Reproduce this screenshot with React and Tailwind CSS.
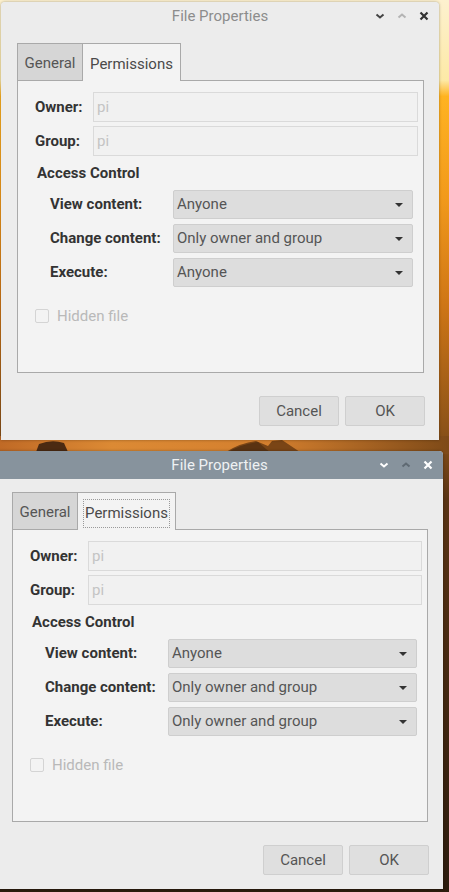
import React from "react";

function Wallpaper() {
  // desktop picture behind the two dialogs
  return (
    <svg className="absolute inset-0" width="449" height="892" viewBox="0 0 449 892">
      <defs>
        <linearGradient id="sky" x1="0" y1="0" x2="0" y2="1">
          <stop offset="0" stopColor="#fdf1cf" />
          <stop offset="0.09" stopColor="#fde9a6" />
          <stop offset="0.108" stopColor="#ffb321" />
          <stop offset="0.22" stopColor="#f29a1b" />
          <stop offset="0.34" stopColor="#cf7616" />
          <stop offset="0.48" stopColor="#8d5318" />
          <stop offset="0.56" stopColor="#5a3414" />
          <stop offset="1" stopColor="#2c1c0e" />
        </linearGradient>
        <linearGradient id="strip" x1="0" y1="0" x2="1" y2="0">
          <stop offset="0" stopColor="#c06a26" />
          <stop offset="0.25" stopColor="#dc8a34" />
          <stop offset="0.6" stopColor="#d47f2e" />
          <stop offset="1" stopColor="#7e4a18" />
        </linearGradient>
      </defs>
      <rect width="449" height="892" fill="url(#sky)" />
      <rect y="436" width="449" height="18" fill="url(#strip)" />
      <path d="M36 452 L39 444 Q52 439 64 443 L68 452 Z" fill="#4b2a12" />
      <path d="M226 452 Q240 443 256 441 L268 446 L272 441 L282 440 L300 452 Z" fill="#7a4516" />
      <path d="M228 452 Q242 444 258 442 L266 449 L270 452 Z" fill="#5a3312" />
    </svg>
  );
}

function Chevron({ up, color }) {
  return (
    <svg width="10" height="10" viewBox="0 0 10 10">
      <polyline
        points={up ? "1.5,6.5 5,3.5 8.5,6.5" : "1.5,3.5 5,6.5 8.5,3.5"}
        fill="none"
        stroke={color}
        strokeWidth="2"
      />
    </svg>
  );
}

function Close({ color }) {
  return (
    <svg width="10" height="10" viewBox="0 0 10 10">
      <path d="M1.5 1.5 L8.5 8.5 M8.5 1.5 L1.5 8.5" stroke={color} strokeWidth="2.2" />
    </svg>
  );
}

function TitleBar({ active }) {
  return (
    <div
      className={`relative flex h-[28px] items-center justify-center rounded-t-[4px] ${
        active ? "bg-[#87939d] text-[#eef1f3]" : "bg-[#ececec] text-[#8c8c8c]"
      }`}
    >
      <span className="text-[15px]">File Properties</span>
      <div className="absolute right-[10px] top-0 flex h-full items-center gap-[12px]">
        <Chevron color={active ? "#ffffff" : "#444444"} />
        <Chevron up color={active ? "#5f6a73" : "#b4b4b4"} />
        <Close color={active ? "#ffffff" : "#333333"} />
      </div>
    </div>
  );
}

function Combo({ value }) {
  return (
    <div className="flex h-[29px] flex-1 items-center justify-between rounded-[2px] border border-[#cecece] bg-[#dddddd] pl-[3px] pr-[8px] text-[#555555]">
      <span>{value}</span>
      <svg width="10" height="6" viewBox="0 0 10 6">
        <polygon points="1,1 9,1 5,5" fill="#333333" />
      </svg>
    </div>
  );
}

function Dialog({ active, execute, className }) {
  const rows = [
    ["View content:", "Anyone"],
    ["Change content:", "Only owner and group"],
    ["Execute:", execute],
  ];

  return (
    <div
      className={`relative flex flex-col rounded-t-[4px] bg-[#ececec] shadow-[0_0_3px_rgba(0,0,0,0.35)] ${className}`}
    >
      <TitleBar active={active} />

      <div className="ml-[16px] mr-[15px] mt-[13px] flex flex-col">
        {/* tabs */}
        <div className="flex">
          <div className="flex h-[37px] w-[66px] items-center justify-center border border-b-0 border-[#a9a9a9] bg-[#d6d6d6] pt-[2px] text-[#555555]">
            General
          </div>
          <div className="relative z-10 -mb-px flex h-[38px] w-[98px] border border-b-0 border-l-0 border-[#a9a9a9] bg-[#f3f3f3] px-[5px] pb-[2px] pt-[6px] text-[#4a4a4a]">
            <span
              className={`flex flex-1 items-center justify-center border border-dotted ${
                active ? "border-[#9a9a9a]" : "border-transparent"
              }`}
            >
              Permissions
            </span>
          </div>
        </div>

        {/* page */}
        <div className="flex h-[293px] flex-col border border-[#a9a9a9] bg-[#f3f3f3] pl-[17px] pr-[5px] pt-[11px]">
          {["Owner:", "Group:"].map((label, i) => (
            <div key={label} className={`flex h-[30px] items-center ${i ? "mt-[4px]" : ""}`}>
              <span className="w-[58px] font-bold text-[#333333]">{label}</span>
              <div className="flex h-[30px] flex-1 items-center border border-[#dadada] bg-[#f1f1f1] pl-[3px] text-[#c4c4c4]">
                pi
              </div>
            </div>
          ))}

          <div className="mt-[7px] h-[20px] pl-[2px] font-bold leading-[20px] text-[#333333]">
            Access Control
          </div>

          <div className="mt-[7px] flex flex-col gap-[5px]">
            {rows.map(([label, value]) => (
              <div key={label} className="mr-[5px] flex items-center">
                <span className="w-[138px] pl-[15px] font-bold text-[#333333]">{label}</span>
                <Combo value={value} />
              </div>
            ))}
          </div>

          <div className="mt-[22px] flex h-[14px] items-center">
            <span className="h-[14px] w-[14px] rounded-[2px] border border-[#d4d4d4] bg-[#f3f3f3]" />
            <span className="ml-[8px] text-[#b9b9b9]">Hidden file</span>
          </div>
        </div>
      </div>

      {/* buttons */}
      <div className="mb-[14px] mr-[14px] mt-[23px] flex justify-end gap-[6px]">
        {["Cancel", "OK"].map((b) => (
          <button
            key={b}
            className="h-[30px] w-[80px] rounded-[2px] border border-[#cfcfcf] bg-[#dfdfdf] text-[#555555]"
          >
            {b}
          </button>
        ))}
      </div>
    </div>
  );
}

export default function App() {
  return (
    <div className="relative h-[892px] w-[449px] overflow-hidden font-[Roboto,sans-serif] text-[15px]">
      <Wallpaper />
      <div className="relative flex flex-col">
        <Dialog className="ml-[1px] mt-[2px] w-[438px]" execute="Anyone" />
        <Dialog className="ml-[-4px] mt-[11px] w-[447px]" active execute="Only owner and group" />
      </div>
    </div>
  );
}
